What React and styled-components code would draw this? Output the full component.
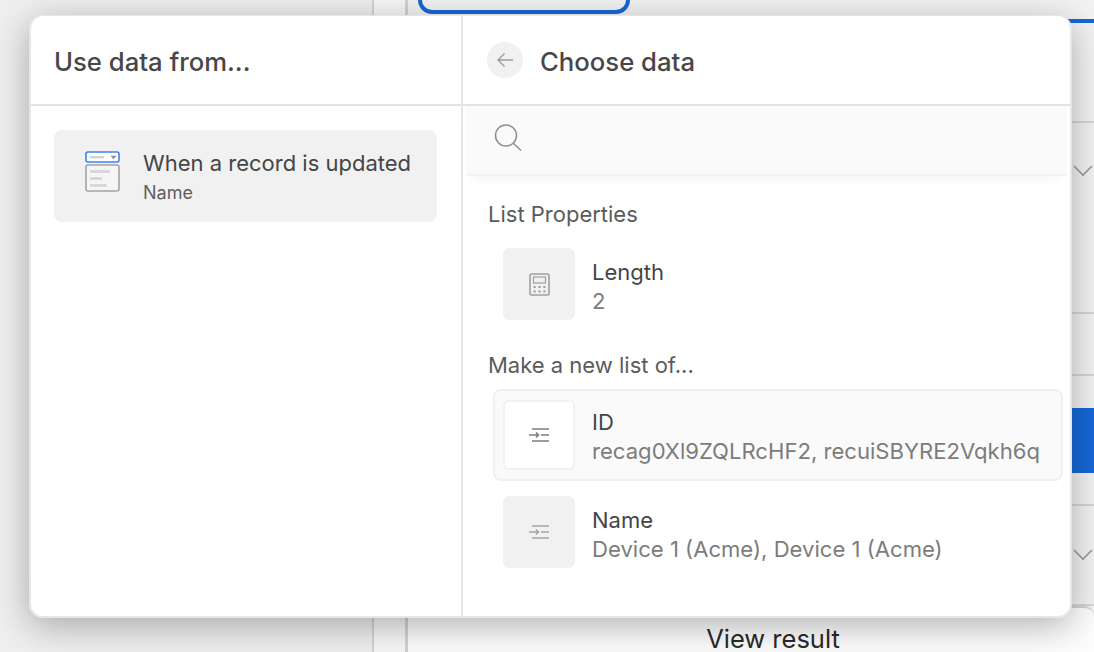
import React from 'react';
import styled, { createGlobalStyle } from 'styled-components';

const GlobalStyle = createGlobalStyle`
  html, body {
    margin: 0;
    padding: 0;
    width: 100%;
    height: 100%;
    overflow: hidden;
    background: #f4f4f4;
    font-family: Inter, 'Noto Sans', sans-serif;
  }
  * { box-sizing: border-box; }
`;

const Page = styled.div`
  position: relative;
  width: 1094px;
  height: 652px;
  overflow: hidden;
  display: flex;
  background: #f3f3f3;
`;

/* app behind the dialog */
const Sidebar = styled.div`
  width: 374px;
  flex-shrink: 0;
  background: #efefef;
  border-right: 2px solid #d4d4d4;
`;

const Gutter = styled.div`
  width: 31px;
  flex-shrink: 0;
  background: #f7f7f7;
`;

const Main = styled.div`
  flex: 1;
  min-width: 0;
  display: flex;
  flex-direction: column;
  border-left: 3px solid #d2d2d2;
`;

const TopBlock = styled.div`
  height: 23px;
  flex-shrink: 0;
  border-bottom: 4px solid #1668d8;
  padding-left: 13px;
  margin-left: -3px;
`;

const Pill = styled.div`
  width: 212px;
  height: 14px;
  border: 4px solid #1668d8;
  border-top: 0;
  border-radius: 0 0 28px 28px;
`;

const Section = styled.div`
  height: ${p => p.$h}px;
  flex-shrink: 0;
  display: flex;
  align-items: ${p => p.$align || 'center'};
  justify-content: flex-end;
  border-bottom: 2px solid #d6d6d6;
  padding-top: ${p => p.$top || 0}px;
`;

const Chevron = styled.svg`
  width: 20px;
  height: 12px;
  margin-right: 1px;
  fill: none;
  stroke: #9c9c9c;
  stroke-width: 1.6;
`;

const BlueButton = styled.div`
  width: 40px;
  height: 65px;
  background: #1668d8;
  border-radius: 8px 0 0 8px;
`;

const ResultCard = styled.div`
  flex: 1;
  background: #fdfdfd;
  border-top: 2px solid #d2d2d2;
  border-radius: 0 10px 0 0;
  display: flex;
  justify-content: center;
  padding: 19px 0 0 44px;
`;

const ResultText = styled.span`
  font-size: 25.5px;
  line-height: 24px;
  color: #2b2b2b;
`;

/* dialog */
const Dialog = styled.div`
  position: absolute;
  left: 29px;
  top: 15px;
  width: 1043px;
  height: 603px;
  display: flex;
  background: #fff;
  border: 2px solid #e2e6ed;
  border-top-width: 1px;
  border-radius: 14px;
  overflow: hidden;
`;

const DialogShadow = styled.div`
  position: absolute;
  left: 29px;
  top: 15px;
  width: 1043px;
  height: 603px;
  border-radius: 14px;
  box-shadow: 0 8px 36px rgba(0, 0, 0, 0.3);
`;

const Pane = styled.div`
  display: flex;
  flex-direction: column;
  width: ${p => p.$w ? `${p.$w}px` : 'auto'};
  flex: ${p => p.$w ? '0 0 auto' : 1};
  min-width: 0;
  border-right: ${p => p.$divider ? '2px solid #e6e6e6' : 0};
`;

const Header = styled.div`
  height: 90px;
  flex-shrink: 0;
  display: flex;
  align-items: center;
  gap: 17px;
  padding: 0 ${p => p.$pad}px;
  border-bottom: 2px solid #e3e3e3;
`;

const Title = styled.h2`
  margin: 0;
  padding-top: 3px;
  font-size: 25.7px;
  font-weight: 500;
  line-height: 30px;
  color: #474747;
`;

const BackButton = styled.div`
  width: 36px;
  height: 36px;
  border-radius: 50%;
  background: #f1f1f1;
  display: flex;
  align-items: center;
  justify-content: center;
`;

const TriggerCard = styled.div`
  margin: 24px 24px 0 23px;
  height: 92px;
  border-radius: 8px;
  background: #f1f1f1;
  display: flex;
  align-items: center;
  padding-left: 31px;
  gap: 22px;
`;

const TriggerGlyph = styled.svg`
  margin-bottom: 8px;
  flex-shrink: 0;
`;

const TriggerText = styled.div`
  display: flex;
  flex-direction: column;
  gap: 6px;
  padding-top: 1px;
`;

const TriggerTitle = styled.div`
  font-size: 22px;
  line-height: 26px;
  color: #454545;
`;

const TriggerSub = styled.div`
  font-size: 18px;
  line-height: 22px;
  color: #5f5f5f;
`;

const SearchBar = styled.div`
  height: 70px;
  flex-shrink: 0;
  margin: 0 3px;
  padding: 0 0 4px 28px;
  display: flex;
  align-items: center;
  background: #fafafa;
  border-bottom: 2px solid #f3f3f3;
  box-shadow: 0 8px 12px -6px rgba(0, 0, 0, 0.05);
`;

const Body = styled.div`
  display: flex;
  flex-direction: column;
  padding: 25px 7px 0 25px;
`;

const GroupLabel = styled.div`
  font-size: 22px;
  line-height: 26px;
  color: #5b5b5b;
  margin-bottom: ${p => p.$mb}px;
`;

const Row = styled.div`
  height: 92px;
  flex-shrink: 0;
  margin: 0 0 ${p => p.$mb || 0}px 5px;
  padding-left: 8px;
  display: flex;
  align-items: center;
  gap: 17px;
  border-radius: 8px;
  border: 2px solid ${p => p.$active ? '#f0f0f0' : 'transparent'};
  background: ${p => p.$active ? '#fafafa' : 'transparent'};
`;

const IconBox = styled.div`
  width: 72px;
  height: ${p => p.$active ? 70 : 72}px;
  flex-shrink: 0;
  border-radius: 6px;
  display: flex;
  align-items: center;
  justify-content: center;
  background: ${p => p.$active ? '#fff' : '#f1f1f1'};
  border: ${p => p.$active ? '2px solid #f1f1f1' : 0};
`;

const RowText = styled.div`
  display: flex;
  flex-direction: column;
  gap: 3px;
  min-width: 0;
  padding-top: ${p => p.$active ? 2 : 5}px;
`;

const RowLabel = styled.div`
  font-size: 22px;
  line-height: 26px;
  color: #454545;
`;

const RowValue = styled.div`
  font-size: 22.1px;
  line-height: 26px;
  color: #7c7c7c;
  white-space: nowrap;
`;

const TriggerIcon = () => (
  <TriggerGlyph width="36" height="42" viewBox="0 0 36 42" fill="none">
    <rect x="1" y="1" width="33" height="10" rx="2" fill="#fff" stroke="#3b82f6" strokeWidth="1.6" />
    <rect x="5" y="5" width="14" height="2.5" rx="1" fill="#d2d2d2" />
    <path d="M25.500 4.800h6l-3 3.400z" fill="#8c8c8c" />
    <rect x="1" y="14" width="33" height="26" rx="2" fill="#f5f5f5" stroke="#a3a3a3" strokeWidth="1.6" />
    <rect x="5" y="19" width="20" height="3" rx="1" fill="#d8d8d8" />
    <rect x="5" y="26" width="12" height="3" rx="1" fill="#d8d8d8" />
    <rect x="5" y="33" width="17" height="3" rx="1" fill="#d8d8d8" />
  </TriggerGlyph>
);

const ArrowIcon = () => (
  <svg width="18" height="18" viewBox="0 0 18 18" fill="none" stroke="#9a9a9a" strokeWidth="1.3">
    <path d="M17 9H2M8.500 2.500 2 9l6.500 6.500" />
  </svg>
);

const SearchIcon = () => (
  <svg width="28" height="28" viewBox="0 0 28 28" fill="none" stroke="#8f8f8f" strokeWidth="1.5">
    <circle cx="12" cy="11.500" r="10.500" />
    <path d="M19.500 19.500 27 26.500" />
  </svg>
);

const CalculatorIcon = () => (
  <svg width="21" height="23" viewBox="0 0 21 23" fill="none">
    <rect x="1" y="1" width="19" height="21" rx="1.500" stroke="#a0a0a0" strokeWidth="1.600" />
    <rect x="4.500" y="4" width="12" height="6" stroke="#a0a0a0" strokeWidth="1.200" />
    <path d="M4.500 14h2.200M9.400 14h2.200M14.300 14h2.200M4.500 18.500h2.200M9.400 18.500h2.200M14.300 18.500h2.200" stroke="#a0a0a0" strokeWidth="1.800" />
  </svg>
);

const IndentIcon = ({ color }) => (
  <svg width="20" height="14" viewBox="0 0 20 14" fill="none" stroke={color} strokeWidth="1.600">
    <path d="M3 1h17M3 13h17M12 7h8M0 7h9.500M7 4.500 9.500 7 7 9.500" />
  </svg>
);

export default function App() {
  return (
    <Page>
      <GlobalStyle />
      <Sidebar />
      <Gutter />
      <Main>
        <TopBlock>
          <Pill />
        </TopBlock>
        <Section $h={100} />
        <Section $h={191} $align="flex-start" $top={42}>
          <Chevron viewBox="0 0 20 12"><path d="M1 1l9 9 9-9" /></Chevron>
        </Section>
        <Section $h={62} />
        <Section $h={130}>
          <BlueButton />
        </Section>
        <Section $h={100}>
          <Chevron viewBox="0 0 20 12"><path d="M1 1l9 9 9-9" /></Chevron>
        </Section>
        <ResultCard>
          <ResultText>View result</ResultText>
        </ResultCard>
      </Main>

      <DialogShadow />
      <Dialog>
        <Pane $w={432} $divider>
          <Header $pad={23}>
            <Title>Use data from...</Title>
          </Header>
          <TriggerCard>
            <TriggerIcon />
            <TriggerText>
              <TriggerTitle>When a record is updated</TriggerTitle>
              <TriggerSub>Name</TriggerSub>
            </TriggerText>
          </TriggerCard>
        </Pane>
        <Pane>
          <Header $pad={24}>
            <BackButton><ArrowIcon /></BackButton>
            <Title>Choose data</Title>
          </Header>
          <SearchBar><SearchIcon /></SearchBar>
          <Body>
            <GroupLabel $mb={11}>List Properties</GroupLabel>
            <Row $mb={22}>
              <IconBox><CalculatorIcon /></IconBox>
              <RowText>
                <RowLabel>Length</RowLabel>
                <RowValue>2</RowValue>
              </RowText>
            </Row>
            <GroupLabel $mb={11}>Make a new list of...</GroupLabel>
            <Row $active $mb={5}>
              <IconBox $active><IndentIcon color="#7d7d7d" /></IconBox>
              <RowText $active>
                <RowLabel>ID</RowLabel>
                <RowValue>recag0Xl9ZQLRcHF2, recuiSBYRE2Vqkh6q</RowValue>
              </RowText>
            </Row>
            <Row>
              <IconBox><IndentIcon color="#a5a5a5" /></IconBox>
              <RowText>
                <RowLabel>Name</RowLabel>
                <RowValue>Device 1 (Acme), Device 1 (Acme)</RowValue>
              </RowText>
            </Row>
          </Body>
        </Pane>
      </Dialog>
    </Page>
  );
}
